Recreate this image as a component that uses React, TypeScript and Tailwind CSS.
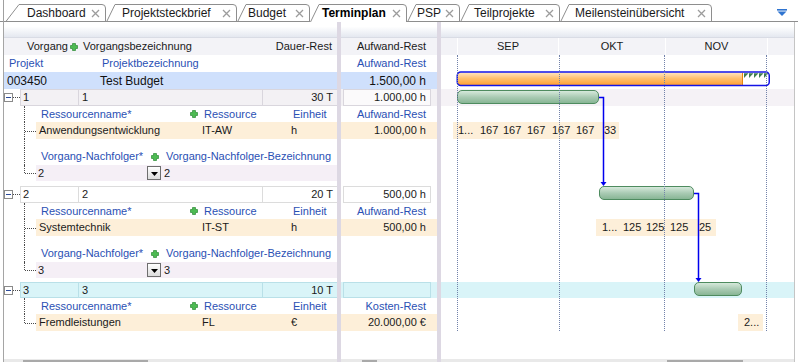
import React from "react";

const SEP = "w-[4px] shrink-0 bg-[#ddd8e3]";
const BLUE = "text-[#2a50b4]";

const Plus = () => (
  <svg width="8" height="8" viewBox="0 0 8 8" className="block">
    <path d="M2.5 0.5h3v2h2v3h-2v2h-3v-2h-2v-3h2z" fill="#4dbb52" stroke="#2b8a33" strokeWidth="0.7" />
  </svg>
);

const CloseX = () => (
  <svg width="9" height="9" viewBox="0 0 9 9" className="block">
    <path d="M1 1L8 8M8 1L1 8" stroke="#9c9c9c" strokeWidth="1.3" />
  </svg>
);

type TabDef = { label: string; w: number; s: number; wc: string; pl: string; active?: boolean };
const TABS: TabDef[] = [
  { label: "Dashboard", w: 101, s: 14, wc: "w-[101px]", pl: "pl-[22px]" },
  { label: "Projektsteckbrief", w: 131, s: 9, wc: "w-[131px]", pl: "pl-[16px]" },
  { label: "Budget", w: 73, s: 9, wc: "w-[73px]", pl: "pl-[11px]" },
  { label: "Terminplan", w: 97, s: 9, wc: "w-[97px]", pl: "pl-[12px]", active: true },
  { label: "PSP", w: 53, s: 9, wc: "w-[53px]", pl: "pl-[10px]" },
  { label: "Teilprojekte", w: 100, s: 9, wc: "w-[100px]", pl: "pl-[14px]" },
  { label: "Meilensteinübersicht", w: 152, s: 9, wc: "w-[152px]", pl: "pl-[15px]" },
];

function TabBar() {
  return (
    <div className="flex h-[22px] shrink-0 items-end">
      <div className="h-full w-[3px] shrink-0 border-b border-[#8e8e8e]" />
      <div className="h-full w-px shrink-0 bg-[#a0a0a0]" />
      <div className="h-full w-px shrink-0 border-b border-[#8e8e8e]" />
      {TABS.map((t) => (
        <div
          key={t.label}
          className={`relative flex h-[18px] shrink-0 items-center justify-between pr-[6px] ${t.wc} ${t.pl}`}
        >
          <svg className="absolute left-0 top-0" width={t.w} height={18}>
            <path
              d={`M0.5 18 L${t.s} 0.5 H${t.w - 4} Q${t.w - 0.5} 0.5 ${t.w - 0.5} 4 V18`}
              fill="#fff"
              stroke="#8e8e8e"
            />
            {!t.active && <line x1="0" y1="17.5" x2={t.w} y2="17.5" stroke="#8e8e8e" />}
          </svg>
          <span className={`relative text-[12px] leading-none ${t.active ? "font-bold text-black" : "text-[#1a1a1a]"}`}>
            {t.label}
          </span>
          <span className="relative">
            <CloseX />
          </span>
        </div>
      ))}
      <div className="flex h-full flex-1 items-start justify-end border-b border-[#8e8e8e] pr-[11px] pt-[9px]">
        <svg width="10" height="7" viewBox="0 0 10 7" className="block">
          <rect x="0" y="0" width="10" height="1.6" fill="#2f74d0" />
          <path d="M0.5 2.6h9L5 7z" fill="#2f74d0" />
        </svg>
      </div>
    </div>
  );
}

type RowProps = {
  h: string;
  left?: React.ReactNode;
  mid?: React.ReactNode;
  gantt?: React.ReactNode;
  lc?: string;
  mc?: string;
  gc?: string;
};

function Row({ h, left, mid, gantt, lc = "", mc = "", gc = "" }: RowProps) {
  return (
    <div className={`flex shrink-0 ${h}`}>
      <div className={`relative flex w-[333px] shrink-0 ${lc}`}>{left}</div>
      <div className={SEP} />
      <div className={`relative flex w-[96px] shrink-0 ${mc}`}>{mid}</div>
      <div className={SEP} />
      <div className={`relative flex w-[353px] shrink-0 ${gc}`}>{gantt}</div>
    </div>
  );
}

function Tree({ kind }: { kind: "through" | "branch" | "end" }) {
  return (
    <div className="relative w-[32px] shrink-0 self-stretch">
      {kind === "end" ? (
        <div className="absolute left-[20px] top-0 h-1/2 border-l border-dotted border-[#4a4a4a]" />
      ) : (
        <div className="absolute left-[20px] top-0 h-full border-l border-dotted border-[#4a4a4a]" />
      )}
      {kind !== "through" && (
        <div className="absolute left-[21px] top-1/2 w-[11px] border-t border-dotted border-[#4a4a4a]" />
      )}
    </div>
  );
}

type Variant = "gray" | "white" | "cyan";
const V: Record<Variant, { cell: string; line: string; midOuter: string; midCell: string; gantt: string }> = {
  gray: {
    cell: "bg-[#f3f1f4]",
    line: "border-[#d9d6dd]",
    midOuter: "bg-[#f3f1f4]",
    midCell: "bg-[#fbfafb]",
    gantt: "bg-[#f5f2f6]",
  },
  white: {
    cell: "bg-white",
    line: "border-[#dcdcdc]",
    midOuter: "bg-white",
    midCell: "bg-white",
    gantt: "bg-white",
  },
  cyan: {
    cell: "bg-[#d9f4f8]",
    line: "border-[#b9e0e8]",
    midOuter: "bg-[#d9f4f8]",
    midCell: "bg-[#d9f4f8]",
    gantt: "bg-[#d9f4f8]",
  },
};

function TaskRow({ h, num, dauer, aufwand, variant }: { h: string; num: string; dauer: string; aufwand: string; variant: Variant }) {
  const v = V[variant];
  return (
    <Row
      h={h}
      mc={v.midOuter}
      gc={v.gantt}
      left={
        <>
          <div className="flex w-[16px] shrink-0 items-center">
            <div className="flex h-[9px] w-[9px] shrink-0 items-center justify-center border border-[#8a8a8a] bg-white">
              <div className="h-px w-[5px] bg-[#2a4a9a]" />
            </div>
            <div className="w-[7px] border-t border-dotted border-[#4a4a4a]" />
          </div>
          <div className={`flex w-[58px] shrink-0 items-center border-y border-l pl-[2px] ${v.cell} ${v.line}`}>{num}</div>
          <div className={`flex w-[184px] shrink-0 items-center border-y border-l pl-[3px] ${v.cell} ${v.line}`}>{num}</div>
          <div className={`flex flex-1 items-center justify-end border-y border-l pr-[4px] ${v.cell} ${v.line}`}>{dauer}</div>
        </>
      }
      mid={
        <>
          <div className="w-[2px] shrink-0" />
          <div className={`flex w-[88px] shrink-0 items-center justify-end border pr-[4px] ${v.midCell} ${v.line}`}>{aufwand}</div>
          <div className="flex-1" />
        </>
      }
    />
  );
}

function ResHeader({ label }: { label: string }) {
  return (
    <Row
      h="h-[16px]"
      mc={`items-center justify-end pr-[11px] ${BLUE}`}
      mid={label}
      left={
        <>
          <Tree kind="through" />
          <div className={`flex flex-1 items-center pl-[5px] ${BLUE}`}>
            <span className="w-[149px] shrink-0">Ressourcenname*</span>
            <span className="w-[14px] shrink-0">
              <Plus />
            </span>
            <span className="w-[89px] shrink-0">Ressource</span>
            <span>Einheit</span>
          </div>
        </>
      }
    />
  );
}

function ResRow({
  name,
  code,
  unit,
  value,
  end,
  gantt,
}: {
  name: string;
  code: string;
  unit: string;
  value: string;
  end?: boolean;
  gantt?: React.ReactNode;
}) {
  return (
    <Row
      h="h-[17px]"
      mc="bg-[#fdefd9] items-center justify-end pr-[11px]"
      mid={value}
      gantt={gantt}
      left={
        <>
          <Tree kind={end ? "end" : "branch"} />
          <div className="flex flex-1 items-center bg-[#fdefd9] pl-[3px]">
            <span className="w-[163px] shrink-0">{name}</span>
            <span className="w-[89px] shrink-0">{code}</span>
            <span>{unit}</span>
          </div>
        </>
      }
    />
  );
}

function GapRow({ h, tree }: { h: string; tree?: boolean }) {
  return <Row h={h} left={tree ? <Tree kind="through" /> : null} />;
}

function VnHeader() {
  return (
    <Row
      h="h-[17px]"
      left={
        <>
          <Tree kind="through" />
          <div className={`flex flex-1 items-center pl-[5px] ${BLUE}`}>
            <span className="w-[110px] shrink-0">Vorgang-Nachfolger*</span>
            <span className="w-[15px] shrink-0">
              <Plus />
            </span>
            <span className="whitespace-nowrap">Vorgang-Nachfolger-Bezeichnung</span>
          </div>
        </>
      }
    />
  );
}

function VnRow({ a }: { a: string }) {
  return (
    <Row
      h="h-[16px]"
      left={
        <>
          <Tree kind="end" />
          <div className="flex flex-1 items-center bg-[#f5eff6] pl-[2px]">
            <span className="w-[109px] shrink-0">{a}</span>
            <div className="flex h-[14px] w-[14px] shrink-0 items-end justify-center border border-[#6e6e6e] bg-linear-to-b from-white to-[#dcdcdc] pb-[3px]">
              <svg width="7" height="4" viewBox="0 0 7 4" className="block">
                <path d="M0 0h7L3.5 4z" fill="#000" />
              </svg>
            </div>
            <span className="pl-[3px]">{a}</span>
          </div>
        </>
      }
    />
  );
}

function Nums({ pos, items }: { pos: string; items: [string, string][] }) {
  return (
    <div className={`absolute top-0 h-full bg-[#fdefd9] ${pos}`}>
      {items.map(([l, t], i) => (
        <span key={i} className={`absolute inset-y-0 flex items-center ${l}`}>
          {t}
        </span>
      ))}
    </div>
  );
}

function GanttOverlay() {
  return (
    <div className="pointer-events-none absolute inset-0">
      {/* Project summary bar */}
      <svg className="absolute left-[452px] top-[49px]" width="320" height="16">
        <defs>
          <linearGradient id="og" x1="0" y1="0" x2="0" y2="1">
            <stop offset="0" stopColor="#ffe6c2" />
            <stop offset="0.45" stopColor="#ffc070" />
            <stop offset="1" stopColor="#ff9f30" />
          </linearGradient>
        </defs>
        <rect x="1.5" y="1.5" width="285" height="13" rx="3" fill="url(#og)" />
        <line x1="286.5" y1="1.8" x2="286.5" y2="14.2" stroke="#e5860f" />
        {[288, 293, 298, 303, 308].map((x) => (
          <path key={x} d={`M${x} 2.2 h4.5 L${x} 7 z`} fill="#3f7d4f" />
        ))}
        <rect x="1.25" y="1" width="312" height="13.5" rx="3.5" fill="none" stroke="#1414e6" strokeWidth="1.5" />
      </svg>

      {/* Task bars */}
      <div className="absolute left-[453px] top-[68px] h-[14px] w-[142px] rounded-[5px] border border-[#4e8b5f] bg-linear-to-b from-[#d6e9db] via-[#aacbb4] to-[#88b695]" />
      <div className="absolute left-[595px] top-[164px] h-[14px] w-[95px] rounded-[5px] border border-[#4e8b5f] bg-linear-to-b from-[#d6e9db] via-[#aacbb4] to-[#88b695]" />
      <div className="absolute left-[690px] top-[260px] h-[14px] w-[48px] rounded-[5px] border border-[#4e8b5f] bg-linear-to-b from-[#d6e9db] via-[#aacbb4] to-[#88b695]" />

      {/* Grid lines */}
      <div className="absolute left-[453px] top-[33px] h-[276px] border-l border-dotted border-[#7282aa]" />
      <div className="absolute left-[555px] top-[33px] h-[276px] border-l border-dotted border-[#7282aa]" />
      <div className="absolute left-[660px] top-[33px] h-[276px] border-l border-dotted border-[#7282aa]" />
      <div className="absolute left-[762px] top-[33px] h-[276px] border-l border-dotted border-[#7282aa]" />

      {/* Connectors */}
      <svg className="absolute left-0 top-0" width="790" height="340">
        <path d="M595 75.5 H599.5 V161" stroke="#0000ee" strokeWidth="1.5" fill="none" />
        <path d="M596.5 160 H602.5 L599.5 164 z" fill="#0000ee" />
        <path d="M690 171.5 H694.5 V257" stroke="#0000ee" strokeWidth="1.5" fill="none" />
        <path d="M691.5 256 H697.5 L694.5 260 z" fill="#0000ee" />
      </svg>
    </div>
  );
}

const STRIP = "bg-linear-to-b from-white from-30% to-[#e4e8f0] border-b border-[#d9dce5]";
const HEAD = "bg-[#f3f3f7] items-center";

export default function App() {
  return (
    <div className="flex h-[362px] w-[798px] flex-col overflow-hidden bg-white font-['Liberation_Sans',Arial,sans-serif] text-[11px] leading-none text-[#1a1a1a]">
      <TabBar />
      <div className="flex h-[340px] shrink-0">
        <div className="w-[3px] shrink-0" />
        <div className="w-px shrink-0 bg-[#a5a5a5]" />
        <div className="relative flex w-[790px] shrink-0 flex-col">
          <Row h="h-[16px]" lc={STRIP} mc={STRIP} gc={STRIP} />
          <Row
            h="h-[17px]"
            lc={HEAD}
            mc={`${HEAD} justify-end pr-[11px]`}
            gc={HEAD}
            left={
              <>
                <span className="w-[23px] shrink-0" />
                <span className="w-[43px] shrink-0">Vorgang</span>
                <span className="w-[13px] shrink-0">
                  <Plus />
                </span>
                <span>Vorgangsbezeichnung</span>
                <span className="flex-1 pr-[5px] text-right">Dauer-Rest</span>
              </>
            }
            mid="Aufwand-Rest"
            gantt={
              <>
                <div className="w-[16px] shrink-0" />
                <div className="flex h-full w-[101px] shrink-0 items-center justify-center border-l border-white">SEP</div>
                <div className="flex h-full w-[107px] shrink-0 items-center justify-center border-l border-white">OKT</div>
                <div className="flex h-full w-[102px] shrink-0 items-center justify-center border-l border-white">NOV</div>
                <div className="h-full flex-1 border-l border-white" />
              </>
            }
          />
          <Row
            h="h-[17px]"
            lc={`items-center pl-[5px] ${BLUE}`}
            mc={`items-center justify-end pr-[11px] ${BLUE}`}
            left={
              <>
                <span className="w-[93px] shrink-0">Projekt</span>
                <span>Projektbezeichnung</span>
              </>
            }
            mid="Aufwand-Rest"
          />
          <Row
            h="h-[17px]"
            lc="items-center pl-[3px] bg-[#cfe0fc] text-[12px] text-[#111]"
            mc="items-center justify-end pr-[11px] bg-[#cfe0fc] text-[12px] text-[#111]"
            left={
              <>
                <span className="w-[93px] shrink-0">003450</span>
                <span>Test Budget</span>
              </>
            }
            mid="1.500,00 h"
          />

          {/* Group 1 */}
          <TaskRow h="h-[17px]" num="1" dauer="30 T" aufwand="1.000,00 h" variant="gray" />
          <ResHeader label="Aufwand-Rest" />
          <ResRow
            name="Anwendungsentwicklung"
            code="IT-AW"
            unit="h"
            value="1.000,00 h"
            gantt={
              <Nums
                pos="left-[12px] w-[166px]"
                items={[
                  ["left-[5px]", "1..."],
                  ["left-[27px]", "167"],
                  ["left-[50px]", "167"],
                  ["left-[74px]", "167"],
                  ["left-[99px]", "167"],
                  ["left-[123px]", "167"],
                  ["left-[151px]", "33"],
                ]}
              />
            }
          />
          <GapRow h="h-[9px]" tree />
          <VnHeader />
          <VnRow a="2" />
          <GapRow h="h-[5px]" />

          {/* Group 2 */}
          <TaskRow h="h-[17px]" num="2" dauer="20 T" aufwand="500,00 h" variant="white" />
          <ResHeader label="Aufwand-Rest" />
          <ResRow
            name="Systemtechnik"
            code="IT-ST"
            unit="h"
            value="500,00 h"
            gantt={
              <Nums
                pos="left-[155px] w-[120px]"
                items={[
                  ["left-[6px]", "1..."],
                  ["left-[27px]", "125"],
                  ["left-[50px]", "125"],
                  ["left-[74px]", "125"],
                  ["left-[103px]", "25"],
                ]}
              />
            }
          />
          <GapRow h="h-[9px]" tree />
          <VnHeader />
          <VnRow a="3" />
          <GapRow h="h-[4px]" />

          {/* Group 3 */}
          <TaskRow h="h-[16px]" num="3" dauer="10 T" aufwand="" variant="cyan" />
          <ResHeader label="Kosten-Rest" />
          <ResRow
            name="Fremdleistungen"
            code="FL"
            unit="€"
            value="20.000,00 €"
            end
            gantt={<Nums pos="left-[297px] w-[25px]" items={[["left-[6px]", "2..."]]} />}
          />

          <div className="flex min-h-0 flex-1">
            <div className="w-[333px] shrink-0" />
            <div className={SEP} />
            <div className="w-[96px] shrink-0" />
            <div className={SEP} />
            <div className="w-[353px] shrink-0" />
          </div>

          <Row
            h="h-[3px]"
            lc="bg-[#e9e9e9]"
            mc="bg-[#e9e9e9]"
            gc="bg-[#e9e9e9]"
            left={<div className="absolute left-[19px] top-[1px] h-[2px] w-[125px] bg-[#a9a9a9]" />}
            mid={<div className="absolute left-[21px] top-[1px] h-[2px] w-[15px] bg-[#a9a9a9]" />}
            gantt={<div className="absolute left-[226px] top-[1px] h-[2px] w-[76px] bg-[#a9a9a9]" />}
          />

          <GanttOverlay />
        </div>
        <div className="w-px shrink-0 bg-[#c4c4c4]" />
        <div className="w-[3px] shrink-0" />
      </div>
    </div>
  );
}
